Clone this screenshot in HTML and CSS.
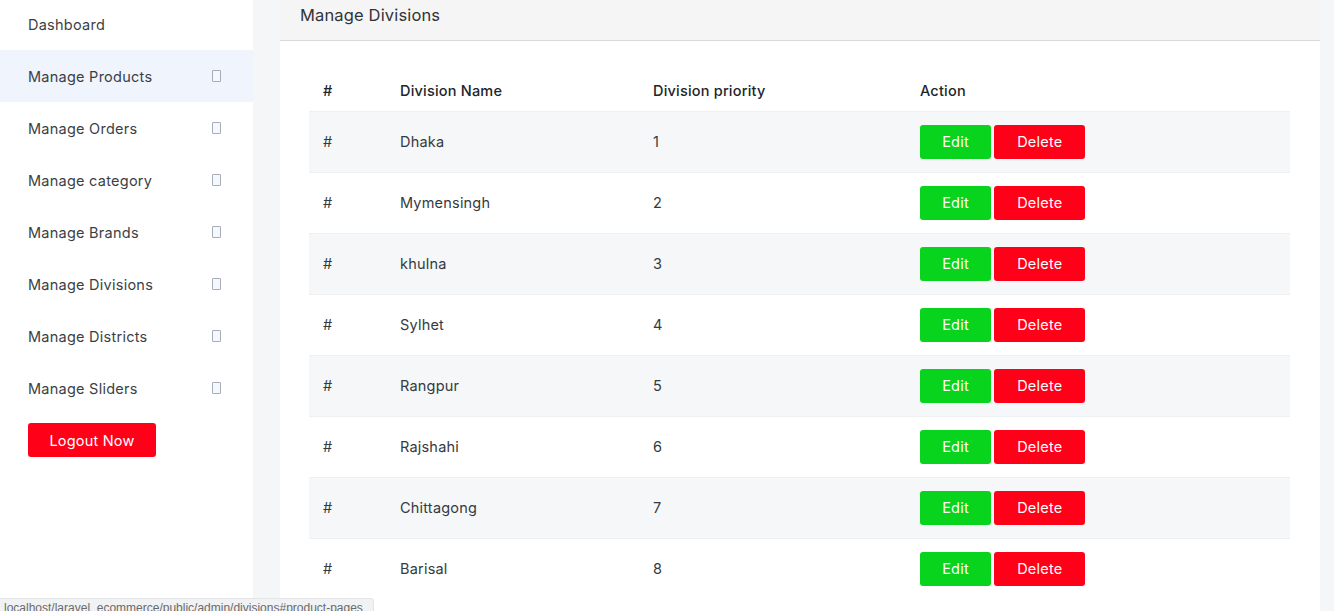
FILE: index.html
```html
<!DOCTYPE html>
<html>
<head>
<meta charset="utf-8">
<title>Manage Divisions</title>
<link rel="stylesheet" href="styles.css">
</head>
<body>
<div class="layout">
  <aside class="sidebar">
    <ul class="menu">
      <li class="menu-item"><span>Dashboard</span></li>
      <li class="menu-item active"><span>Manage Products</span><i class="tofu"></i></li>
      <li class="menu-item"><span>Manage Orders</span><i class="tofu"></i></li>
      <li class="menu-item"><span>Manage category</span><i class="tofu"></i></li>
      <li class="menu-item"><span>Manage Brands</span><i class="tofu"></i></li>
      <li class="menu-item"><span>Manage Divisions</span><i class="tofu"></i></li>
      <li class="menu-item"><span>Manage Districts</span><i class="tofu"></i></li>
      <li class="menu-item"><span>Manage Sliders</span><i class="tofu"></i></li>
    </ul>
    <div class="logout-wrap"><button class="btn btn-red btn-logout">Logout Now</button></div>
  </aside>
  <main class="main">
    <section class="card">
      <div class="card-header">Manage Divisions</div>
      <div class="card-body">
        <table class="table">
          <thead>
            <tr><th class="c1">#</th><th class="c2">Division Name</th><th class="c3">Division priority</th><th class="c4">Action</th></tr>
          </thead>
          <tbody>
            <tr><td>#</td><td>Dhaka</td><td>1</td><td><button class="btn btn-green">Edit</button> <button class="btn btn-red btn-del">Delete</button></td></tr>
            <tr><td>#</td><td>Mymensingh</td><td>2</td><td><button class="btn btn-green">Edit</button> <button class="btn btn-red btn-del">Delete</button></td></tr>
            <tr><td>#</td><td>khulna</td><td>3</td><td><button class="btn btn-green">Edit</button> <button class="btn btn-red btn-del">Delete</button></td></tr>
            <tr><td>#</td><td>Sylhet</td><td>4</td><td><button class="btn btn-green">Edit</button> <button class="btn btn-red btn-del">Delete</button></td></tr>
            <tr><td>#</td><td>Rangpur</td><td>5</td><td><button class="btn btn-green">Edit</button> <button class="btn btn-red btn-del">Delete</button></td></tr>
            <tr><td>#</td><td>Rajshahi</td><td>6</td><td><button class="btn btn-green">Edit</button> <button class="btn btn-red btn-del">Delete</button></td></tr>
            <tr><td>#</td><td>Chittagong</td><td>7</td><td><button class="btn btn-green">Edit</button> <button class="btn btn-red btn-del">Delete</button></td></tr>
            <tr><td>#</td><td>Barisal</td><td>8</td><td><button class="btn btn-green">Edit</button> <button class="btn btn-red btn-del">Delete</button></td></tr>
          </tbody>
        </table>
      </div>
    </section>
  </main>
</div>
<div class="status-bubble">localhost/laravel_ecommerce/public/admin/divisions#product-pages</div>
</body>
</html>
```
FILE: styles.css
```css
* { box-sizing: border-box; }
html, body { margin: 0; padding: 0; }
body {
  font-family: Inter, "Noto Sans", sans-serif;
  color: #343a40;
  background: #f5f6f8;
  height: 611px;
  overflow: hidden;
}
.layout { display: flex; align-items: stretch; min-height: 611px; }
.sidebar {
  width: 253px;
  flex: 0 0 253px;
  background: #ffffff;
}
.menu { list-style: none; margin: -2px 0 0; padding: 0; }
.menu-item {
  height: 52px;
  display: flex;
  align-items: center;
  justify-content: space-between;
  padding: 0 32px 0 28px;
  font-size: 14.5px;
  letter-spacing: 0.25px;
  color: #3b3f45;
}
.menu-item.active { background: #eff4fd; }
.tofu {
  display: inline-block;
  width: 9px;
  height: 12px;
  border: 1px solid #a8acb6;
  border-radius: 1px;
  background: #f4f8ff;
}
.logout-wrap { padding: 9px 28px; }
.btn {
  border: 0;
  border-radius: 3px;
  color: #fff;
  font-family: inherit;
  font-size: 14.5px;
  letter-spacing: 0.2px;
  height: 34px;
  padding: 0;
  cursor: pointer;
  vertical-align: middle;
}
.btn-red { background: #ff0019; }
.btn-green { background: #08d31d; width: 71px; }
.btn-del { width: 91px; margin-left: -1px; }
.btn-logout { width: 128px; }
.main { flex: 1; padding: 0 14px 0 27px; }
.card { background: #fff; min-height: 611px; }
.card-header {
  background: #f5f5f5;
  border-bottom: 1px solid #d9d9d9;
  height: 41px;
  padding: 3px 20px 0;
  line-height: 24px;
  font-size: 16.5px;
  letter-spacing: 0.15px;
  color: #2f3439;
}
.card-body { padding: 29px 30px 0 29px; }
.table { width: 981px; border-collapse: collapse; font-size: 14.5px; letter-spacing: 0.2px; }
.table th {
  text-align: left;
  font-weight: 500;
  color: #212529;
  height: 41px;
  padding: 0 14px;
}
.table td {
  height: 61px;
  padding: 0 14px;
  border-top: 1px solid #eef0f2;
  color: #343a40;
}
.table tbody tr:nth-child(odd) td { background: #f6f7f9; }
.c1 { width: 77px; }
.c2 { width: 253px; }
.c3 { width: 267px; }
.status-bubble {
  position: fixed;
  left: 0;
  top: 598px;
  height: 22px;
  padding: 2px 6px 0 4px;
  background: #f1f2f4;
  border: 1px solid #e3e4e6;
  border-left: 0;
  border-radius: 0 4px 0 0;
  font-family: "Liberation Sans", sans-serif;
  font-size: 12px;
  color: #6a6a6a;
  width: 374px;
  white-space: nowrap;
  overflow: hidden;
}
```
